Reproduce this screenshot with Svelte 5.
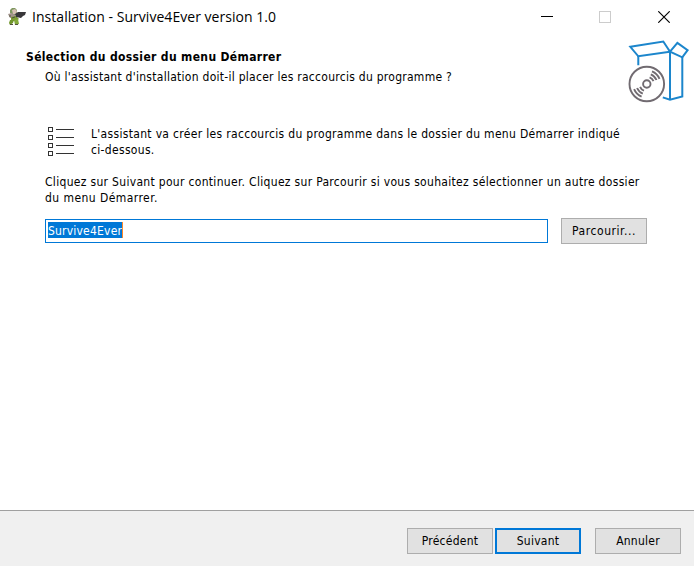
<script>
  const title = 'Installation - Survive4Ever version 1.0';
  let folder = $state('Survive4Ever');
</script>

<div class="window">
  <header class="titlebar">
    <svg class="appicon" width="20" height="20" viewBox="0 0 20 20" aria-hidden="true">
      <path d="M3 6 L3 3 L5 1 L8 1 L10 3 L10 6 L8 8 L5 8Z" fill="#7f9860" />
      <path d="M5 3 L8 2 L10 4 L9 7 L6 7Z" fill="#d6c0b4" />
      <path d="M1 7 L5 6 L9 9 L7 11 L3 11Z" fill="#a3948c" />
      <path d="M4 10 L9 9 L12 12 L9 14 L4 14Z" fill="#7c9c34" />
      <path d="M3 13 L7 13 L6 16 L3 18 L2 16Z" fill="#71962c" />
      <path d="M7 13 L11 12 L12 17 L8 18Z" fill="#83a93a" />
      <path d="M8 7 L11 5 L19 5 L18 8 L16 9 L14 11 L9 10Z" fill="#39373a" />
      <path d="M2 9 H4 M5 11 L8 10 M3 17.5 H6 M8 17.5 H11" stroke="#51533e" fill="none" />
    </svg>
    <span class="title">{title}</span>
    <div class="controls">
      <svg width="12" height="12" viewBox="0 0 12 12" shape-rendering="crispEdges"><path d="M0 5.5H12" stroke="#000" /></svg>
      <svg width="12" height="12" viewBox="0 0 12 12"><rect x=".5" y=".5" width="11" height="11" fill="none" stroke="#ccc" /></svg>
      <svg class="close" width="12" height="12" viewBox="0 0 12 12"><path d="M.3 .3 L11.7 11.7 M11.7 .3 L.3 11.7" stroke="#000" stroke-width="1.15" /></svg>
    </div>
  </header>

  <section class="banner">
    <div class="heads">
      <h1>Sélection du dossier du menu Démarrer</h1>
      <p class="sub">Où l'assistant d'installation doit-il placer les raccourcis du programme ?</p>
    </div>
    <svg class="box" width="64" height="68" viewBox="626 37 64 68" fill="none" aria-hidden="true">
      <g stroke="#1c86cc" stroke-width="2">
        <path d="M630.3 46.8 L663.3 41.5 L670 51.7 L638.3 56.3Z" />
        <path d="M670 51.7 L677.4 42.9 L687.6 50.2 L682.3 57.3Z" />
        <path d="M638.3 56V65.3 M670 52V100 M682.3 57V96.5 L670 99.8 L662.8 97.4" />
      </g>
      <g stroke="#716b71" stroke-width="1.9">
        <circle cx="646.8" cy="84" r="17.3" />
        <circle cx="646.8" cy="84" r="3.7" />
        <path d="M649.6 77.3A7.2 7.2 0 0 1 653.5 81.2 M650.8 74.3A10.5 10.5 0 0 1 656.5 80 M652 71.3A13.7 13.7 0 0 1 659.5 78.8" />
        <path d="M644 90.7A7.2 7.2 0 0 1 640.1 86.8 M642.8 93.7A10.5 10.5 0 0 1 637.1 88 M641.6 96.7A13.7 13.7 0 0 1 634.1 89.2" />
      </g>
    </svg>
  </section>

  <main>
    <div class="intro">
      <svg width="28" height="30" viewBox="0 0 28 30" shape-rendering="crispEdges" fill="none" stroke="#333" aria-hidden="true">
        {#each [0, 8, 16, 24] as y}
          <rect x="0.5" y={y + 0.5} width="4" height="4" />
          <path d="M8 {y + 2.5}H26" />
        {/each}
      </svg>
      <p>L'assistant va créer les raccourcis du programme dans le dossier du menu Démarrer indiqué<br />ci-dessous.</p>
    </div>
    <p class="hint">Cliquez sur Suivant pour continuer. Cliquez sur Parcourir si vous souhaitez sélectionner un autre dossier<br /><span class="tail">du menu Démarrer.</span></p>
    <div class="picker">
      <div class="field"><span class="selection">{folder}</span></div>
      <button class="browse">Parcourir...</button>
    </div>
  </main>

  <footer>
    <button>Précédent</button>
    <button class="primary">Suivant</button>
    <button class="cancel">Annuler</button>
  </footer>
</div>

<style>
  :global(body) { margin: 0; background: #fff; }
  .window {
    width: 694px; height: 566px; display: flex; flex-direction: column; overflow: hidden;
    background: #fff; color: #000;
    font: 12px/16px 'DejaVu Sans Condensed', 'DejaVu Sans', sans-serif;
    font-stretch: condensed;
  }
  p, h1 { margin: 0; font-size: 12px; line-height: 16px; white-space: nowrap; }
  p { letter-spacing: .32px; }
  h1 { letter-spacing: .35px; }
  .titlebar { height: 34px; display: flex; align-items: center; padding: 0 24px 0 7px; box-sizing: border-box; }
  .appicon { margin-right: 5px; }
  .title { font: 14px/20px 'Open Sans', 'Noto Sans', sans-serif; letter-spacing: .04px; white-space: nowrap; }
  .controls { margin-left: auto; display: flex; gap: 46px; }
  .controls svg { display: block; }
  .controls .close { margin-left: 1px; }
  .banner { height: 71px; display: flex; justify-content: space-between; padding: 3px 4px 0 26px; box-sizing: border-box; }
  .heads { padding-top: 12px; }
  .sub { margin: 4px 0 0 19px; letter-spacing: .27px; }
  .box { display: block; }
  main { flex: 1; padding: 21px 0 0 45px; }
  .intro { display: flex; gap: 15px; padding-left: 3px; }
  .intro svg { display: block; margin-top: 1px; }
  .hint { margin-top: 16px; letter-spacing: .313px; }
  .tail { letter-spacing: .44px; }
  .picker { display: flex; align-items: center; gap: 13px; margin-top: 12px; }
  .field { width: 503px; height: 24px; box-sizing: border-box; border: 1px solid #0078d7; padding: 2px; display: flex; align-items: flex-start; }
  .selection { display: block; height: 16px; line-height: 18px; width: 74px; background: #0078d7; color: #fff; border-right: 1px solid #ff8728; white-space: nowrap; letter-spacing: .2px; }
  button {
    width: 86px; height: 26px; box-sizing: border-box; padding: 0; border: 1px solid #adadad; border-radius: 0;
    background: #e1e1e1; color: #000; font: inherit; text-align: center; letter-spacing: .25px;
  }
  .browse { letter-spacing: .55px; }
  .primary { border: 2px solid #0078d7; margin-left: 2px; }
  .cancel { margin-left: 14px; }
  footer { height: 56px; box-sizing: border-box; border-top: 1px solid #a0a0a0; background: #f0f0f0; display: flex; justify-content: flex-end; padding: 17px 13px 0 0; }
</style>
